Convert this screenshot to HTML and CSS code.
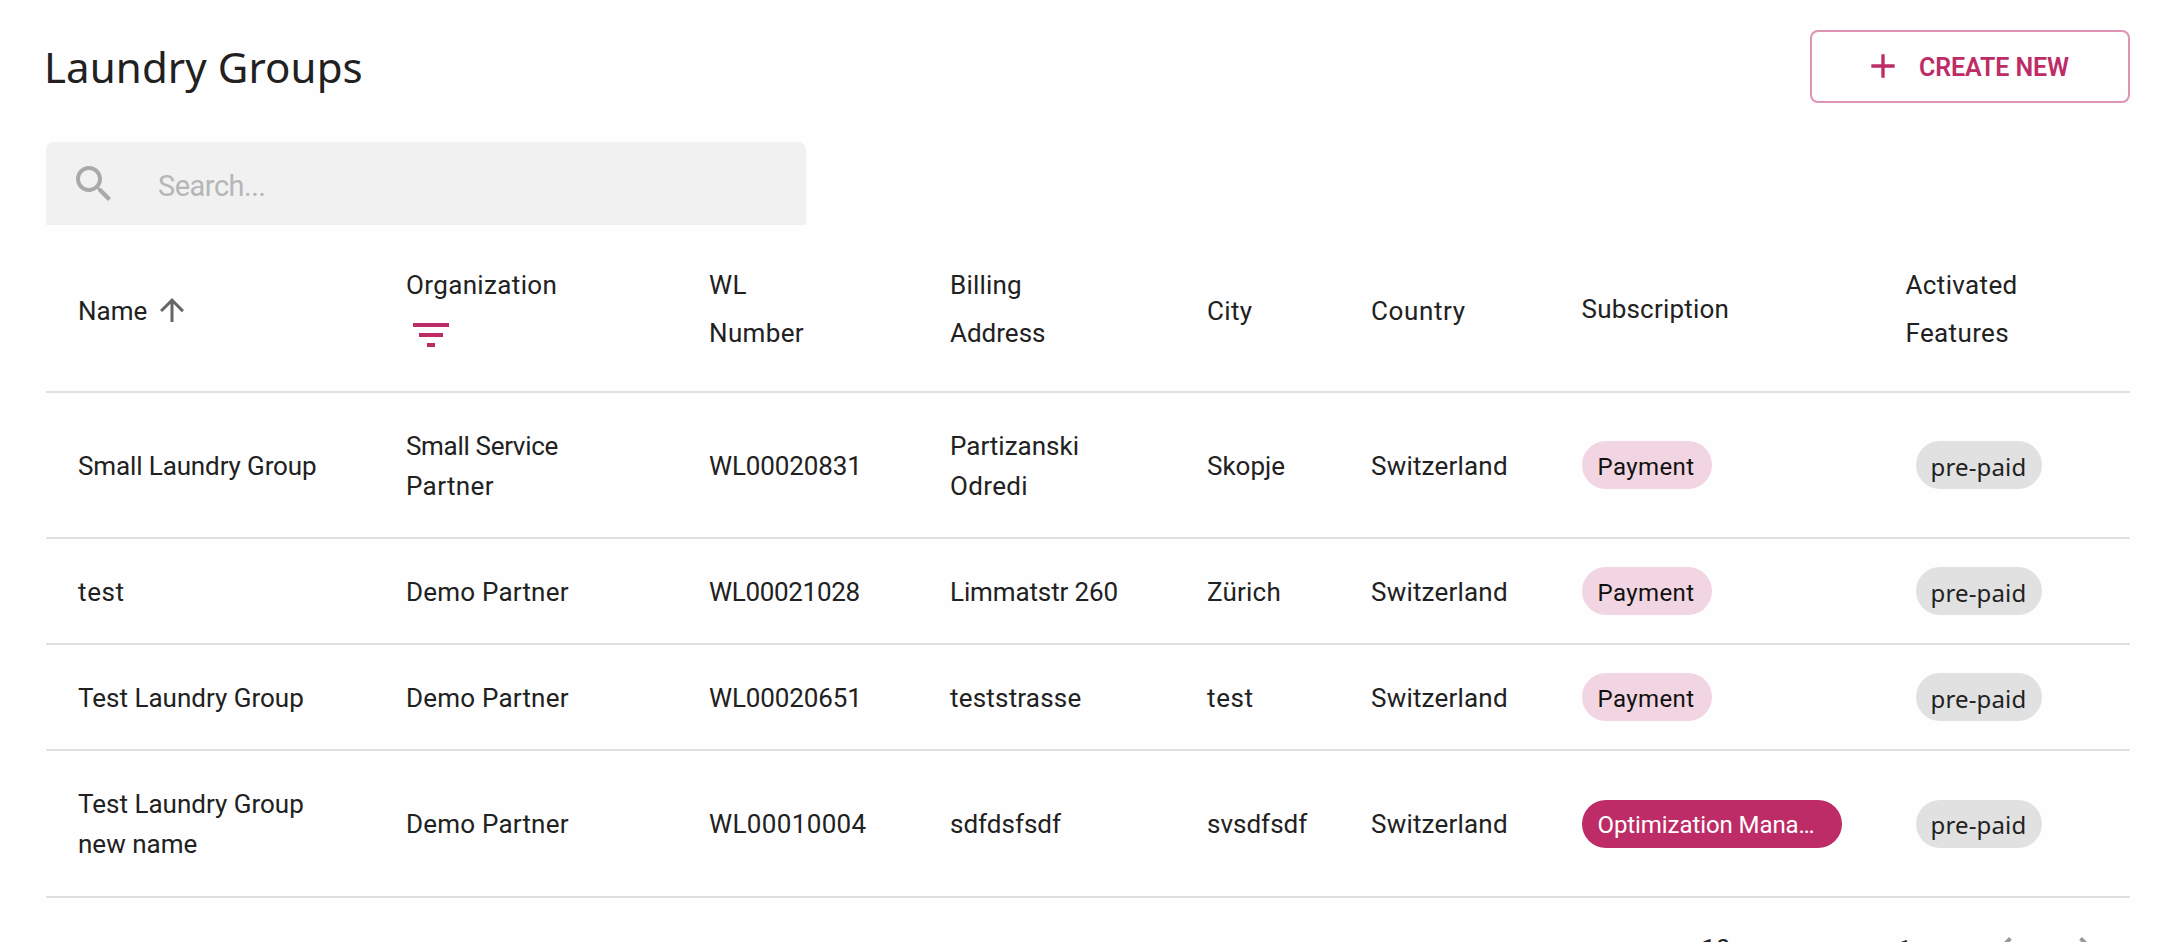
FILE: index.html
```html
<!DOCTYPE html>
<html lang="en">
<head>
<meta charset="utf-8">
<title>Laundry Groups</title>
<link rel="stylesheet" href="styles.css">
</head>
<body>
<main class="page">
  <header class="page-head">
    <h1 class="title">Laundry Groups</h1>
    <button class="create" type="button">
      <svg class="create-icon" viewBox="0 0 24 24"><path d="M19 13h-6v6h-2v-6H5v-2h6V5h2v6h6v2z"/></svg>
      <span>CREATE NEW</span>
    </button>
  </header>

  <div class="search">
    <svg class="search-icon" viewBox="0 0 24 24"><path d="M15.5 14h-.79l-.28-.27C15.41 12.59 16 11.11 16 9.5 16 5.91 13.09 3 9.5 3S3 5.91 3 9.5 5.91 16 9.5 16c1.61 0 3.09-.59 4.23-1.57l.27.28v.79l5 4.99L20.49 19l-4.99-5zm-6 0C7.01 14 5 11.99 5 9.5S7.01 5 9.5 5 14 7.01 14 9.5 11.99 14 9.5 14z"/></svg>
    <span class="search-text">Search...</span>
  </div>

  <section class="table">
    <div class="row head">
      <div class="cell low sort"><span>Name</span>
        <svg class="sort-icon" viewBox="0 0 24 24"><path d="M4 12l1.41 1.41L11 7.83V20h2V7.83l5.58 5.59L20 12l-8-8-8 8z"/></svg>
      </div>
      <div class="cell filter"><span class="ls4">Organization</span>
        <svg class="filter-icon" viewBox="0 0 24 24"><path d="M10 18h4v-2h-4v2zM3 6v2h18V6H3zm3 7h12v-2H6v2z"/></svg>
      </div>
      <div class="cell ls4">WL<br>Number</div>
      <div class="cell"><span class="ls2">Billing</span><br><span>Address</span></div>
      <div class="cell low ls4">City</div>
      <div class="cell low ls6">Country</div>
      <div class="cell ls2">Subscription</div>
      <div class="cell ls4">Activated<br>Features</div>
    </div>

    <div class="row tall">
      <div class="cell lsn1">Small Laundry Group</div>
      <div class="cell"><span class="lsn3">Small Service</span><br><span class="ls4">Partner</span></div>
      <div class="cell lsn1">WL00020831</div>
      <div class="cell"><span>Partizanski</span><br><span class="ls4">Odredi</span></div>
      <div class="cell">Skopje</div>
      <div class="cell ls2">Switzerland</div>
      <div class="tag"><span class="chip pink">Payment</span></div>
      <div class="tag"><span class="chip grey">pre-paid</span></div>
    </div>

    <div class="row">
      <div class="cell ls6">test</div>
      <div class="cell ls2">Demo Partner</div>
      <div class="cell lsn3">WL00021028</div>
      <div class="cell lsn1">Limmatstr 260</div>
      <div class="cell ls2">Zürich</div>
      <div class="cell ls2">Switzerland</div>
      <div class="tag"><span class="chip pink">Payment</span></div>
      <div class="tag"><span class="chip grey">pre-paid</span></div>
    </div>

    <div class="row">
      <div class="cell">Test Laundry Group</div>
      <div class="cell ls2">Demo Partner</div>
      <div class="cell lsn1">WL00020651</div>
      <div class="cell ls2">teststrasse</div>
      <div class="cell ls6">test</div>
      <div class="cell ls2">Switzerland</div>
      <div class="tag"><span class="chip pink">Payment</span></div>
      <div class="tag"><span class="chip grey">pre-paid</span></div>
    </div>

    <div class="row last">
      <div class="cell">Test Laundry Group<br>new name</div>
      <div class="cell ls2">Demo Partner</div>
      <div class="cell ls4">WL00010004</div>
      <div class="cell">sdfdsfsdf</div>
      <div class="cell">svsdfsdf</div>
      <div class="cell ls2">Switzerland</div>
      <div class="tag"><span class="chip solid">Optimization Mana…</span></div>
      <div class="tag"><span class="chip grey">pre-paid</span></div>
    </div>
  </section>

  <footer class="pager">
    <span class="page-size">10</span>
    <span class="page-number">1</span>
    <svg class="chevron" viewBox="0 0 24 24"><path d="M15.41 7.41L14 6l-6 6 6 6 1.41-1.41L10.83 12z"/></svg>
    <svg class="chevron next" viewBox="0 0 24 24"><path d="M10 6L8.59 7.41 13.17 12l-4.58 4.59L10 18l6-6z"/></svg>
  </footer>
</main>
</body>
</html>
```
FILE: styles.css
```css
* { box-sizing: border-box; }
body {
  margin: 0;
  background: #fefefe;
  color: #212121;
  font-family: Roboto, sans-serif;
  font-size: 26px;
}
svg { display: block; flex: none; fill: currentColor; }

.page {
  height: 942px;
  padding: 30px 48px 0 46px;
  overflow: hidden;
}

.page-head {
  display: flex;
  justify-content: space-between;
  align-items: flex-start;
  height: 112px;
}
.title {
  margin: 12px 0 0 -2px;
  font: 400 42px/50px "Noto Sans", sans-serif;
  letter-spacing: 0.1px;
}
.create {
  display: flex;
  align-items: center;
  gap: 16px;
  width: 320px;
  height: 73px;
  padding: 0 0 0 51px;
  border: 2px solid #de94b3;
  border-radius: 8px;
  background: transparent;
  color: #bd2c66;
  font: 600 25px Roboto, sans-serif;
  letter-spacing: -0.1px;
  white-space: nowrap;
}
.create span { padding-top: 1px; }
.create-icon { width: 40px; height: 40px; margin-top: -1px; }

.search {
  display: flex;
  align-items: center;
  gap: 40px;
  width: 760px;
  height: 83px;
  padding-left: 24px;
  border-radius: 8px 8px 0 0;
  background: #f1f1f1;
  color: #a9a9a9;
}
.search-icon { width: 48px; height: 48px; }
.search-text {
  padding-top: 5px;
  color: #b6b6b6;
  font-size: 29px;
  letter-spacing: -0.5px;
}

.row {
  display: grid;
  grid-template-columns: 328px 303px 241px 257px 164px 210.5px 324px 1fr;
  align-items: center;
  height: 106px;
  padding-left: 32px;
  border-bottom: 2px solid #e0e0e0;
  line-height: 40px;
  white-space: nowrap;
}
.head { height: 168px; line-height: 48px; }
.tall { height: 146px; }
.last { height: 147px; }
.cell { padding-top: 2px; }
.last .cell { padding-top: 1px; }
.low { padding-top: 6px; }

.sort { display: flex; align-items: center; gap: 8px; }
.sort-icon { width: 36px; height: 36px; margin: -3px 0 0 -1px; color: #666; }
.filter { display: flex; flex-direction: column; height: 98px; }
.filter-icon {
  width: 48px;
  height: 48px;
  margin: 2px 0 0 1px;
  color: #bd2c66;
}

.chip {
  display: inline-flex;
  align-items: center;
  height: 48px;
  padding: 3px 16px 0;
  border-radius: 24px;
  font-size: 24px;
}
.tag { display: flex; }
.pink { width: 130px; background: #f2d5e2; color: #111; letter-spacing: 0.4px; }
.grey {
  width: 126px;
  margin-left: 10px;
  padding-left: 15px;
  background: #e1e1e1;
  font-family: "Noto Sans", sans-serif;
  letter-spacing: 0.15px;
}
.solid { width: 260px; background: #bd2c66; color: #fff; letter-spacing: -0.08px; }

.pager {
  display: flex;
  justify-content: flex-end;
  padding: 27px 20px 0 0;
  line-height: 30px;
}
.page-size { margin: 9px 167px 0 0; }
.page-number { margin: 10px 69px 0 0; }
.chevron { width: 48px; height: 48px; color: #999; }
.next { margin-left: 33px; }

.lsn3 { letter-spacing: -0.32px; }
.lsn1 { letter-spacing: -0.12px; }
.ls2 { letter-spacing: 0.2px; }
.ls4 { letter-spacing: 0.36px; }
.ls6 { letter-spacing: 0.62px; }
```
